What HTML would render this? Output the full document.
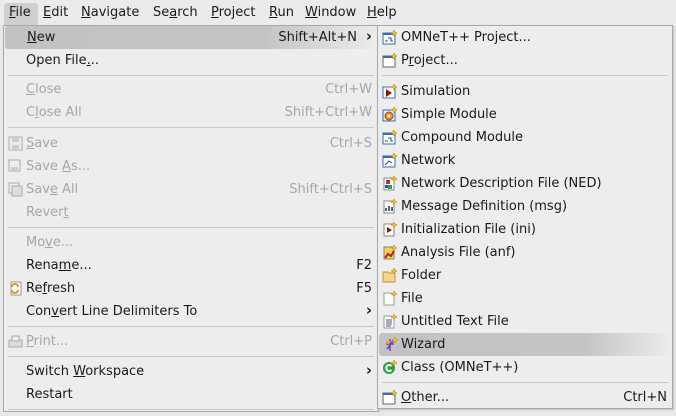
<!DOCTYPE html>
<html><head><style>
*{margin:0;padding:0;box-sizing:border-box}
body{width:676px;height:416px;overflow:hidden;background:#e8e8e8;font-family:"DejaVu Sans","Liberation Sans",sans-serif;font-size:13px;color:#1a1a1a;position:relative}
.bar{position:absolute;left:0;top:0;width:676px;height:26px;background:#ebebeb}
.bar span{position:absolute;top:5px}
.filebtn{position:absolute;left:4px;top:3px;width:34px;height:22px;background:#cfcfcf;border-radius:3px 3px 0 0}
.menu{position:absolute;background:#ededed;border:1px solid #a8a8a8}
.it{position:absolute;left:0;right:0;height:23px;line-height:23px}
.it .t{position:absolute;left:22px}
.it .k{position:absolute;right:6px}
.dis{color:#a6a6a6}
.sep{position:absolute;left:4px;right:4px;height:1px;background:#c9c9c9}
.hl{background:linear-gradient(90deg,#c2c2c2 0%,#c4c4c4 70%,#ececec 100%);border-radius:3px}
.arr{position:absolute;right:6px;font-size:15px;font-weight:bold;top:-1px}
.ic{position:absolute;left:4px;top:4px;width:15px;height:15px}
u{text-decoration:underline}
</style></head><body>
<div class="bar">
<div class="filebtn"></div>
<span style="left:9px"><u>F</u>ile</span>
<span style="left:43px"><u>E</u>dit</span>
<span style="left:81px"><u>N</u>avigate</span>
<span style="left:153px">Se<u>a</u>rch</span>
<span style="left:211px"><u>P</u>roject</span>
<span style="left:269px"><u>R</u>un</span>
<span style="left:305px"><u>W</u>indow</span>
<span style="left:367px"><u>H</u>elp</span>
</div>

<div class="menu" style="left:3px;top:25px;width:376px;height:387px">
<div class="it hl" style="top:0;left:1px;right:1px"><span class="t" style="left:22px"><u>N</u>ew</span><span class="k" style="right:20px">Shift+Alt+N</span><span class="arr" style="right:5px">›</span></div>
<div class="it" style="top:23px"><span class="t">Open File<u>.</u>..</span></div>
<div class="sep" style="top:49px"></div>
<div class="it dis" style="top:52px"><span class="t"><u>C</u>lose</span><span class="k">Ctrl+W</span></div>
<div class="it dis" style="top:75px"><span class="t">C<u>l</u>ose All</span><span class="k">Shift+Ctrl+W</span></div>
<div class="sep" style="top:101px"></div>
<div class="it dis" style="top:106px"><svg class="ic" viewBox="0 0 15 15"><rect x="1" y="1" width="13" height="13" fill="none" stroke="#aaa"/><rect x="4" y="2" width="7" height="4" fill="#ccc"/><rect x="4" y="9" width="7" height="4" fill="#ccc"/></svg><span class="t"><u>S</u>ave</span><span class="k">Ctrl+S</span></div>
<div class="it dis" style="top:129px"><svg class="ic" viewBox="0 0 15 15"><rect x="1" y="1" width="11" height="11" fill="none" stroke="#aaa"/><rect x="3" y="8" width="7" height="3" fill="#ccc"/></svg><span class="t">Save <u>A</u>s...</span></div>
<div class="it dis" style="top:152px"><svg class="ic" viewBox="0 0 15 15"><rect x="1" y="1" width="10" height="10" fill="none" stroke="#aaa"/><rect x="4" y="4" width="10" height="10" fill="#ddd" stroke="#aaa"/></svg><span class="t">Sav<u>e</u> All</span><span class="k">Shift+Ctrl+S</span></div>
<div class="it dis" style="top:175px"><span class="t">Rever<u>t</u></span></div>
<div class="sep" style="top:201px"></div>
<div class="it dis" style="top:205px"><span class="t">Mo<u>v</u>e...</span></div>
<div class="it" style="top:228px"><span class="t">Rena<u>m</u>e...</span><span class="k">F2</span></div>
<div class="it" style="top:251px"><svg class="ic" viewBox="0 0 15 15"><rect x="3" y="1" width="10" height="13" fill="#fff" stroke="#999"/><path d="M4 6a3 3 0 0 1 6 0M10 9a3 3 0 0 1-6 0" fill="none" stroke="#d89a20" stroke-width="2"/></svg><span class="t">Re<u>f</u>resh</span><span class="k">F5</span></div>
<div class="it" style="top:274px"><span class="t">Con<u>v</u>ert Line Delimiters To</span><span class="arr">›</span></div>
<div class="sep" style="top:300px"></div>
<div class="it dis" style="top:304px"><svg class="ic" viewBox="0 0 15 15"><rect x="1" y="6" width="13" height="7" fill="#ddd" stroke="#aaa"/><rect x="4" y="2" width="7" height="5" fill="#eee" stroke="#aaa"/></svg><span class="t"><u>P</u>rint...</span><span class="k">Ctrl+P</span></div>
<div class="sep" style="top:330px"></div>
<div class="it" style="top:334px"><span class="t">Switch <u>W</u>orkspace</span><span class="arr">›</span></div>
<div class="it" style="top:357px"><span class="t">Restart</span></div>
<div class="sep" style="top:383px"></div>
</div>

<div class="menu" style="left:377px;top:25px;width:296px;height:384px;box-shadow:1px 1px 2px rgba(0,0,0,.15)">
<div class="it" style="top:0"><svg class="ic" viewBox="0 0 15 15"><rect x="1" y="3" width="12" height="11" fill="#fff" stroke="#3a6ab0"/><rect x="1" y="3" width="12" height="2" fill="#3a6ab0"/><path d="M3 11h3M6 8h3v3h2" stroke="#1a4a90" fill="none"/><path d="M12 0l1.2 2 2 1-2 1-1.2 2-1-2-2-1 2-1z" fill="#f0c030" stroke="#b08010" stroke-width=".5"/></svg><span class="t" style="left:23px">OMNeT++ Project...</span></div>
<div class="it" style="top:23px"><svg class="ic" viewBox="0 0 15 15"><rect x="1" y="3" width="12" height="11" fill="#fff" stroke="#667"/><rect x="1" y="3" width="12" height="2" fill="#3a6ab0"/><path d="M12 0l1.2 2 2 1-2 1-1.2 2-1-2-2-1 2-1z" fill="#f0c030" stroke="#b08010" stroke-width=".5"/></svg><span class="t" style="left:23px">P<u>r</u>oject...</span></div>
<div class="sep" style="top:49px"></div>
<div class="it" style="top:54px"><svg class="ic" viewBox="0 0 15 15"><rect x="1" y="3" width="12" height="11" fill="#fff" stroke="#3a6ab0"/><path d="M4 5l6 4-6 4z" fill="#901010"/><path d="M12 0l1.2 2 2 1-2 1-1.2 2-1-2-2-1 2-1z" fill="#f0c030" stroke="#b08010" stroke-width=".5"/></svg><span class="t" style="left:23px">Simulation</span></div>
<div class="it" style="top:77px"><svg class="ic" viewBox="0 0 15 15"><rect x="1" y="3" width="12" height="11" fill="#e0ecf8" stroke="#3a6ab0"/><circle cx="7" cy="9" r="4" fill="#e09020" stroke="#a05010"/><circle cx="7" cy="9" r="1.5" fill="#fff"/><path d="M12 0l1.2 2 2 1-2 1-1.2 2-1-2-2-1 2-1z" fill="#f0c030" stroke="#b08010" stroke-width=".5"/></svg><span class="t" style="left:23px">Simple Module</span></div>
<div class="it" style="top:100px"><svg class="ic" viewBox="0 0 15 15"><rect x="1" y="3" width="12" height="11" fill="#fff" stroke="#3a6ab0"/><rect x="1" y="3" width="12" height="2" fill="#3a6ab0"/><path d="M3 11h3M6 8h3v3h2" stroke="#1a4a90" fill="none"/><path d="M12 0l1.2 2 2 1-2 1-1.2 2-1-2-2-1 2-1z" fill="#f0c030" stroke="#b08010" stroke-width=".5"/></svg><span class="t" style="left:23px">Compound Module</span></div>
<div class="it" style="top:123px"><svg class="ic" viewBox="0 0 15 15"><rect x="1" y="3" width="12" height="11" fill="#fff" stroke="#3a6ab0"/><rect x="1" y="3" width="12" height="2" fill="#3a6ab0"/><path d="M3 12l4-4 3 2" stroke="#1a4a90" fill="none"/><path d="M12 0l1.2 2 2 1-2 1-1.2 2-1-2-2-1 2-1z" fill="#f0c030" stroke="#b08010" stroke-width=".5"/></svg><span class="t" style="left:23px">Network</span></div>
<div class="it" style="top:146px"><svg class="ic" viewBox="0 0 15 15"><rect x="2" y="2" width="10" height="12" fill="#fff" stroke="#888"/><rect x="4" y="4" width="4" height="4" fill="#c03030"/><rect x="6" y="9" width="4" height="4" fill="#30a030"/><rect x="3" y="9" width="3" height="3" fill="#3050c0"/><path d="M12 0l1.2 2 2 1-2 1-1.2 2-1-2-2-1 2-1z" fill="#f0c030" stroke="#b08010" stroke-width=".5"/></svg><span class="t" style="left:23px">Network Description File (NED)</span></div>
<div class="it" style="top:169px"><svg class="ic" viewBox="0 0 15 15"><rect x="2" y="2" width="10" height="12" fill="#fff" stroke="#888"/><path d="M4 12v-3M7 12v-5M10 12v-4" stroke="#234" stroke-width="1.5"/><path d="M12 0l1.2 2 2 1-2 1-1.2 2-1-2-2-1 2-1z" fill="#f0c030" stroke="#b08010" stroke-width=".5"/></svg><span class="t" style="left:23px">Message Definition (msg)</span></div>
<div class="it" style="top:192px"><svg class="ic" viewBox="0 0 15 15"><rect x="2" y="2" width="10" height="12" fill="#fff" stroke="#888"/><path d="M5 5l5 3-5 3z" fill="#901010"/><path d="M12 0l1.2 2 2 1-2 1-1.2 2-1-2-2-1 2-1z" fill="#f0c030" stroke="#b08010" stroke-width=".5"/></svg><span class="t" style="left:23px">Initialization File (ini)</span></div>
<div class="it" style="top:215px"><svg class="ic" viewBox="0 0 15 15"><rect x="2" y="2" width="10" height="12" fill="#f0d060" stroke="#886"/><path d="M3 13l3-4 3 2 3-5" stroke="#c02020" stroke-width="2" fill="none"/><path d="M12 0l1.2 2 2 1-2 1-1.2 2-1-2-2-1 2-1z" fill="#f0c030" stroke="#b08010" stroke-width=".5"/></svg><span class="t" style="left:23px">Analysis File (anf)</span></div>
<div class="it" style="top:238px"><svg class="ic" viewBox="0 0 15 15"><path d="M1 4h5l1 1h6v9H1z" fill="#f5d590" stroke="#c09040"/><path d="M12 0l1.2 2 2 1-2 1-1.2 2-1-2-2-1 2-1z" fill="#f0c030" stroke="#b08010" stroke-width=".5"/></svg><span class="t" style="left:23px">Folder</span></div>
<div class="it" style="top:261px"><svg class="ic" viewBox="0 0 15 15"><path d="M2 2h7l3 3v9H2z" fill="#fff" stroke="#999"/><path d="M12 0l1.2 2 2 1-2 1-1.2 2-1-2-2-1 2-1z" fill="#f0c030" stroke="#b08010" stroke-width=".5"/></svg><span class="t" style="left:23px">File</span></div>
<div class="it" style="top:284px"><svg class="ic" viewBox="0 0 15 15"><path d="M2 2h7l3 3v9H2z" fill="#fff" stroke="#999"/><path d="M4 6h6M4 8h6M4 10h6M4 12h5" stroke="#557"/><path d="M12 0l1.2 2 2 1-2 1-1.2 2-1-2-2-1 2-1z" fill="#f0c030" stroke="#b08010" stroke-width=".5"/></svg><span class="t" style="left:23px">Untitled Text File</span></div>
<div class="it hl" style="top:307px;left:1px;right:1px"><svg class="ic" viewBox="0 0 15 15"><path d="M7 2v12M3 7h8M4 12l6-8" stroke="#7040c0" stroke-width="1.5"/><circle cx="5" cy="5" r="2" fill="#e0b030"/><path d="M12 0l1.2 2 2 1-2 1-1.2 2-1-2-2-1 2-1z" fill="#f0c030" stroke="#b08010" stroke-width=".5"/></svg><span class="t" style="left:22px">Wizard</span></div>
<div class="it" style="top:330px"><svg class="ic" viewBox="0 0 15 15"><circle cx="7" cy="8" r="6" fill="#30a040"/><path d="M9.5 6a3 3 0 1 0 0 4" stroke="#fff" stroke-width="2" fill="none"/><path d="M12 0l1.2 2 2 1-2 1-1.2 2-1-2-2-1 2-1z" fill="#f0c030" stroke="#b08010" stroke-width=".5"/></svg><span class="t" style="left:23px">Class (OMNeT++)</span></div>
<div class="sep" style="top:356px"></div>
<div class="it" style="top:360px"><svg class="ic" viewBox="0 0 15 15"><rect x="1" y="3" width="12" height="11" fill="#fff" stroke="#667"/><rect x="1" y="3" width="12" height="2" fill="#3a6ab0"/><path d="M12 0l1.2 2 2 1-2 1-1.2 2-1-2-2-1 2-1z" fill="#f0c030" stroke="#b08010" stroke-width=".5"/></svg><span class="t" style="left:23px"><u>O</u>ther...</span><span class="k" style="right:5px">Ctrl+N</span></div>
</div>
</body></html>
